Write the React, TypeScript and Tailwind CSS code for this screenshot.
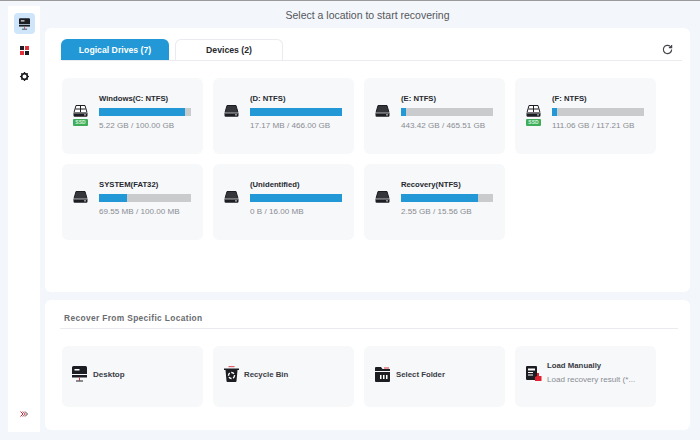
import React from 'react';

const DriveIcon = ({ ssd }: { ssd?: boolean }) => (
  <div className="flex flex-col items-center w-[15px]">
    <svg width="15" height="12" viewBox="0 0 15 12">
      <path d="M3 0.500h9l2 7h-13z" fill={ssd ? '#fff' : '#34363c'} stroke="#1c1d22" strokeWidth="1" />
      {ssd && <path d="M7.500 1v6.500M2.500 4h10" stroke="#1c1d22" strokeWidth="1" />}
      <path d="M0.500 8h14v2.500a1.200 1.200 0 0 1-1.200 1.200H1.700a1.200 1.200 0 0 1-1.200-1.200z" fill="#1c1d22" />
      <rect x="1" y="7.600" width="13" height="0.700" fill="#fff" />
      <rect x="11" y="9.500" width="2" height="0.800" fill="#fff" />
    </svg>
    {ssd && (
      <div className="mt-[2px] w-[15px] h-[7px] bg-[#3fae5a] rounded-[1px] text-[#d6f2dc] text-[5px] leading-[7px] text-center font-bold">
        SSD
      </div>
    )}
  </div>
);

interface Drive {
  name: string;
  size: string;
  pct: number;
  ssd?: boolean;
}

const drives: Drive[] = [
  { name: 'Windows(C: NTFS)', size: '5.22 GB / 100.00 GB', pct: 94, ssd: true },
  { name: '(D: NTFS)', size: '17.17 MB / 466.00 GB', pct: 100 },
  { name: '(E: NTFS)', size: '443.42 GB / 465.51 GB', pct: 5 },
  { name: '(F: NTFS)', size: '111.06 GB / 117.21 GB', pct: 5, ssd: true },
  { name: 'SYSTEM(FAT32)', size: '69.55 MB / 100.00 MB', pct: 30 },
  { name: '(Unidentified)', size: '0 B / 16.00 MB', pct: 100 },
  { name: 'Recovery(NTFS)', size: '2.55 GB / 15.56 GB', pct: 84 },
];

const DriveCard = ({ drive }: { drive: Drive }) => (
  <div className="h-[76px] bg-[#f6f8fa] rounded-md flex pl-[11px] pt-[15px]">
    <div className="mt-[12px]">
      <DriveIcon ssd={drive.ssd} />
    </div>
    <div className="ml-[11px] w-[92px]">
      <div className="text-[7.7px] leading-[12px] font-bold text-[#26282e] whitespace-nowrap">{drive.name}</div>
      <div className="mt-[3px] h-[8px] bg-[#c9cbcd]">
        <div className="h-full bg-[#2299d6]" style={{ width: `${drive.pct}%` }} />
      </div>
      <div className="mt-[4px] text-[8.1px] leading-[12px] text-[#8b8d92] whitespace-nowrap">{drive.size}</div>
    </div>
  </div>
);

const DesktopIcon = () => (
  <svg width="15" height="16" viewBox="0 0 15 16">
    <path d="M1.500 0h12A1.500 1.500 0 0 1 15 1.500V8H0V1.500A1.500 1.500 0 0 1 1.500 0z" fill="#1c1d22" />
    <rect x="2.500" y="3" width="5" height="1.500" fill="#fff" />
    <rect x="0" y="9" width="15" height="2.500" fill="#1c1d22" />
    <rect x="7" y="11.500" width="1" height="3" fill="#d8323c" />
    <rect x="4" y="14.500" width="7" height="1" fill="#1c1d22" />
  </svg>
);

const RecycleIcon = () => (
  <svg width="15" height="16" viewBox="0 0 15 16">
    <rect x="4.500" y="0" width="6" height="1.200" fill="#e0606a" />
    <rect x="0" y="2.500" width="15" height="1.500" fill="#1c1d22" />
    <path d="M1.500 4h12l-1 11a1 1 0 0 1-1 1h-8a1 1 0 0 1-1-1z" fill="#1c1d22" />
    <circle cx="7.500" cy="9.500" r="3" fill="none" stroke="#fff" strokeWidth="1.400" strokeDasharray="3 1.500" />
  </svg>
);

const FolderIcon = () => (
  <svg width="15" height="15" viewBox="0 0 15 15">
    <path d="M1 0h5l1.500 2H15v2H0V1a1 1 0 0 1 1-1z" fill="#1c1d22" />
    <rect x="9" y="0.500" width="5" height="1" fill="#d8323c" />
    <path d="M0 5h15v9a1 1 0 0 1-1 1H1a1 1 0 0 1-1-1z" fill="#1c1d22" />
    <rect x="5" y="8" width="1.500" height="4" fill="#fff" />
    <rect x="8" y="8" width="1.500" height="4" fill="#fff" />
    <rect x="11" y="8" width="1.500" height="4" fill="#fff" />
  </svg>
);

const LoadIcon = () => (
  <svg width="16" height="16" viewBox="0 0 16 16">
    <rect x="0" y="0" width="11" height="14" rx="1" fill="#1c1d22" />
    <rect x="2" y="2.500" width="7" height="2" fill="#fff" />
    <rect x="2" y="6" width="5" height="1" fill="#fff" />
    <rect x="2" y="8.500" width="5" height="1" fill="#fff" />
    <path d="M11 7h2v3h2.500v5H9v-4l2-1z" fill="#e0222e" />
  </svg>
);

const SidebarIcon = () => (
  <svg width="11" height="12" viewBox="0 0 15 16">
    <path d="M1.500 0h12A1.500 1.500 0 0 1 15 1.500V8H0V1.500A1.500 1.500 0 0 1 1.500 0z" fill="#1c1d22" />
    <rect x="2.500" y="3" width="5" height="1.500" fill="#fff" />
    <rect x="0" y="9" width="15" height="2.500" fill="#1c1d22" />
    <rect x="7" y="11.500" width="1" height="3" fill="#d8323c" />
    <rect x="4" y="14.500" width="7" height="1" fill="#1c1d22" />
  </svg>
);

const GridIcon = () => (
  <svg width="9" height="9" viewBox="0 0 9 9">
    <rect x="0" y="0" width="4" height="4" fill="#1c1d22" />
    <rect x="5" y="0" width="4" height="4" fill="#e0303c" />
    <rect x="0" y="5" width="4" height="4" fill="#e0303c" />
    <rect x="5" y="5" width="4" height="4" fill="#1c1d22" />
  </svg>
);

const GearIcon = () => (
  <svg width="9" height="9" viewBox="0 0 9 9">
    <circle cx="4.500" cy="4.500" r="2.900" fill="none" stroke="#1c1d22" strokeWidth="1.800" />
    <path d="M4.500 0v9M0 4.500h9M1.300 1.300l6.400 6.400M7.700 1.300L1.300 7.700" stroke="#1c1d22" strokeWidth="1.200" strokeDasharray="1.400 6.200 1.400" />
  </svg>
);

const ExpandIcon = () => (
  <svg width="8" height="6" viewBox="0 0 8 6" fill="none" strokeWidth="1">
    <path d="M0.500 0.500L3 3L0.500 5.500" stroke="#c8242e" />
    <path d="M2.800 0.500L5.300 3L2.800 5.500" stroke="#c8242e" />
    <path d="M5 0.500L7.500 3L5 5.500" stroke="#44464b" />
  </svg>
);

const App: React.FC = () => {
  return (
    <div className="w-[700px] h-[440px] overflow-hidden bg-[#f3f6fa] border-t border-[#9a9a9a] flex font-['Liberation_Sans',Arial,sans-serif]">
      {/* Sidebar */}
      <div className="ml-[8px] mt-[5px] w-[32px] h-[426px] bg-white flex flex-col items-center">
        <div className="mt-[7px] w-[21px] h-[21px] rounded-[4px] bg-[#cfe6fa] flex items-center justify-center">
          <SidebarIcon />
        </div>
        <div className="mt-[12px] h-[9px]"><GridIcon /></div>
        <div className="mt-[17px] h-[9px]"><GearIcon /></div>
        <div className="mt-auto mb-[15px] h-[6px]"><ExpandIcon /></div>
      </div>

      {/* Main */}
      <div className="ml-[5px] w-[645px] flex flex-col">
        <div className="h-[27px] flex items-center justify-center text-[10.5px] text-[#55575c] pt-[2px]">
          Select a location to start recovering
        </div>

        <div className="h-[264px] bg-white rounded-md px-[17px]">
          <div className="flex items-end h-[33px] border-b border-[#e9ebee] -mr-[9px] relative">
            <div className="-ml-px w-[108px] h-[21px] rounded-t-[6px] bg-[#2299d6] text-white text-[8.7px] font-bold flex items-center justify-center pt-[2px]">
              Logical Drives (7)
            </div>
            <div className="ml-[6px] w-[108px] h-[21px] rounded-t-[6px] border border-b-0 border-[#e9ebee] text-[#26282e] text-[8.7px] font-bold flex items-center justify-center pt-[2px]">
              Devices (2)
            </div>
            <svg className="absolute right-[9px] top-[16px]" width="11" height="11" viewBox="0 0 24 24" fill="none" stroke="#44464b" strokeWidth="2.600">
              <path d="M21 12a9 9 0 1 1-3-6.700L21 8" />
              <path d="M21 2v6h-6" />
            </svg>
          </div>
          <div className="mt-[17px] grid grid-cols-[repeat(4,141px)] gap-x-[10px] gap-y-[10px]">
            {drives.map(d => (
              <DriveCard key={d.name} drive={d} />
            ))}
          </div>
        </div>

        <div className="mt-[8px] h-[130px] bg-white rounded-md px-[17px]">
          <div className="h-[29px] -mr-[5px] -ml-[2px] pl-[4px] border-b border-[#e9ebee] flex items-center text-[8.4px] font-bold text-[#6a6c70] tracking-[0.35px] pt-[8px]">
            Recover From Specific Location
          </div>
          <div className="mt-[17px] grid grid-cols-[repeat(4,141px)] gap-x-[10px]">
            <div className="h-[61px] bg-[#f6f8fa] rounded-md flex items-center pl-[10px] pb-[5px]">
              <DesktopIcon />
              <span className="ml-[6px] mt-[2px] text-[8px] font-bold text-[#3a3c44]">Desktop</span>
            </div>
            <div className="h-[61px] bg-[#f6f8fa] rounded-md flex items-center pl-[11px] pb-[5px]">
              <RecycleIcon />
              <span className="ml-[5px] mt-[2px] text-[7.8px] font-bold text-[#3a3c44]">Recycle Bin</span>
            </div>
            <div className="h-[61px] bg-[#f6f8fa] rounded-md flex items-center pl-[11px] pb-[5px]">
              <FolderIcon />
              <span className="ml-[6px] mt-[2px] text-[7.8px] font-bold text-[#3a3c44]">Select Folder</span>
            </div>
            <div className="h-[61px] bg-[#f6f8fa] rounded-md flex items-center pl-[11px] pb-[5px]">
              <LoadIcon />
              <div className="ml-[5px] -mt-[2px]">
                <div className="text-[7.8px] leading-[12px] font-bold text-[#3a3c44]">Load Manually</div>
                <div className="mt-[2px] text-[8.1px] leading-[12px] text-[#8b8d92] whitespace-nowrap">Load recovery result (*...</div>
              </div>
            </div>
          </div>
        </div>
      </div>
    </div>
  );
};

export default App;
